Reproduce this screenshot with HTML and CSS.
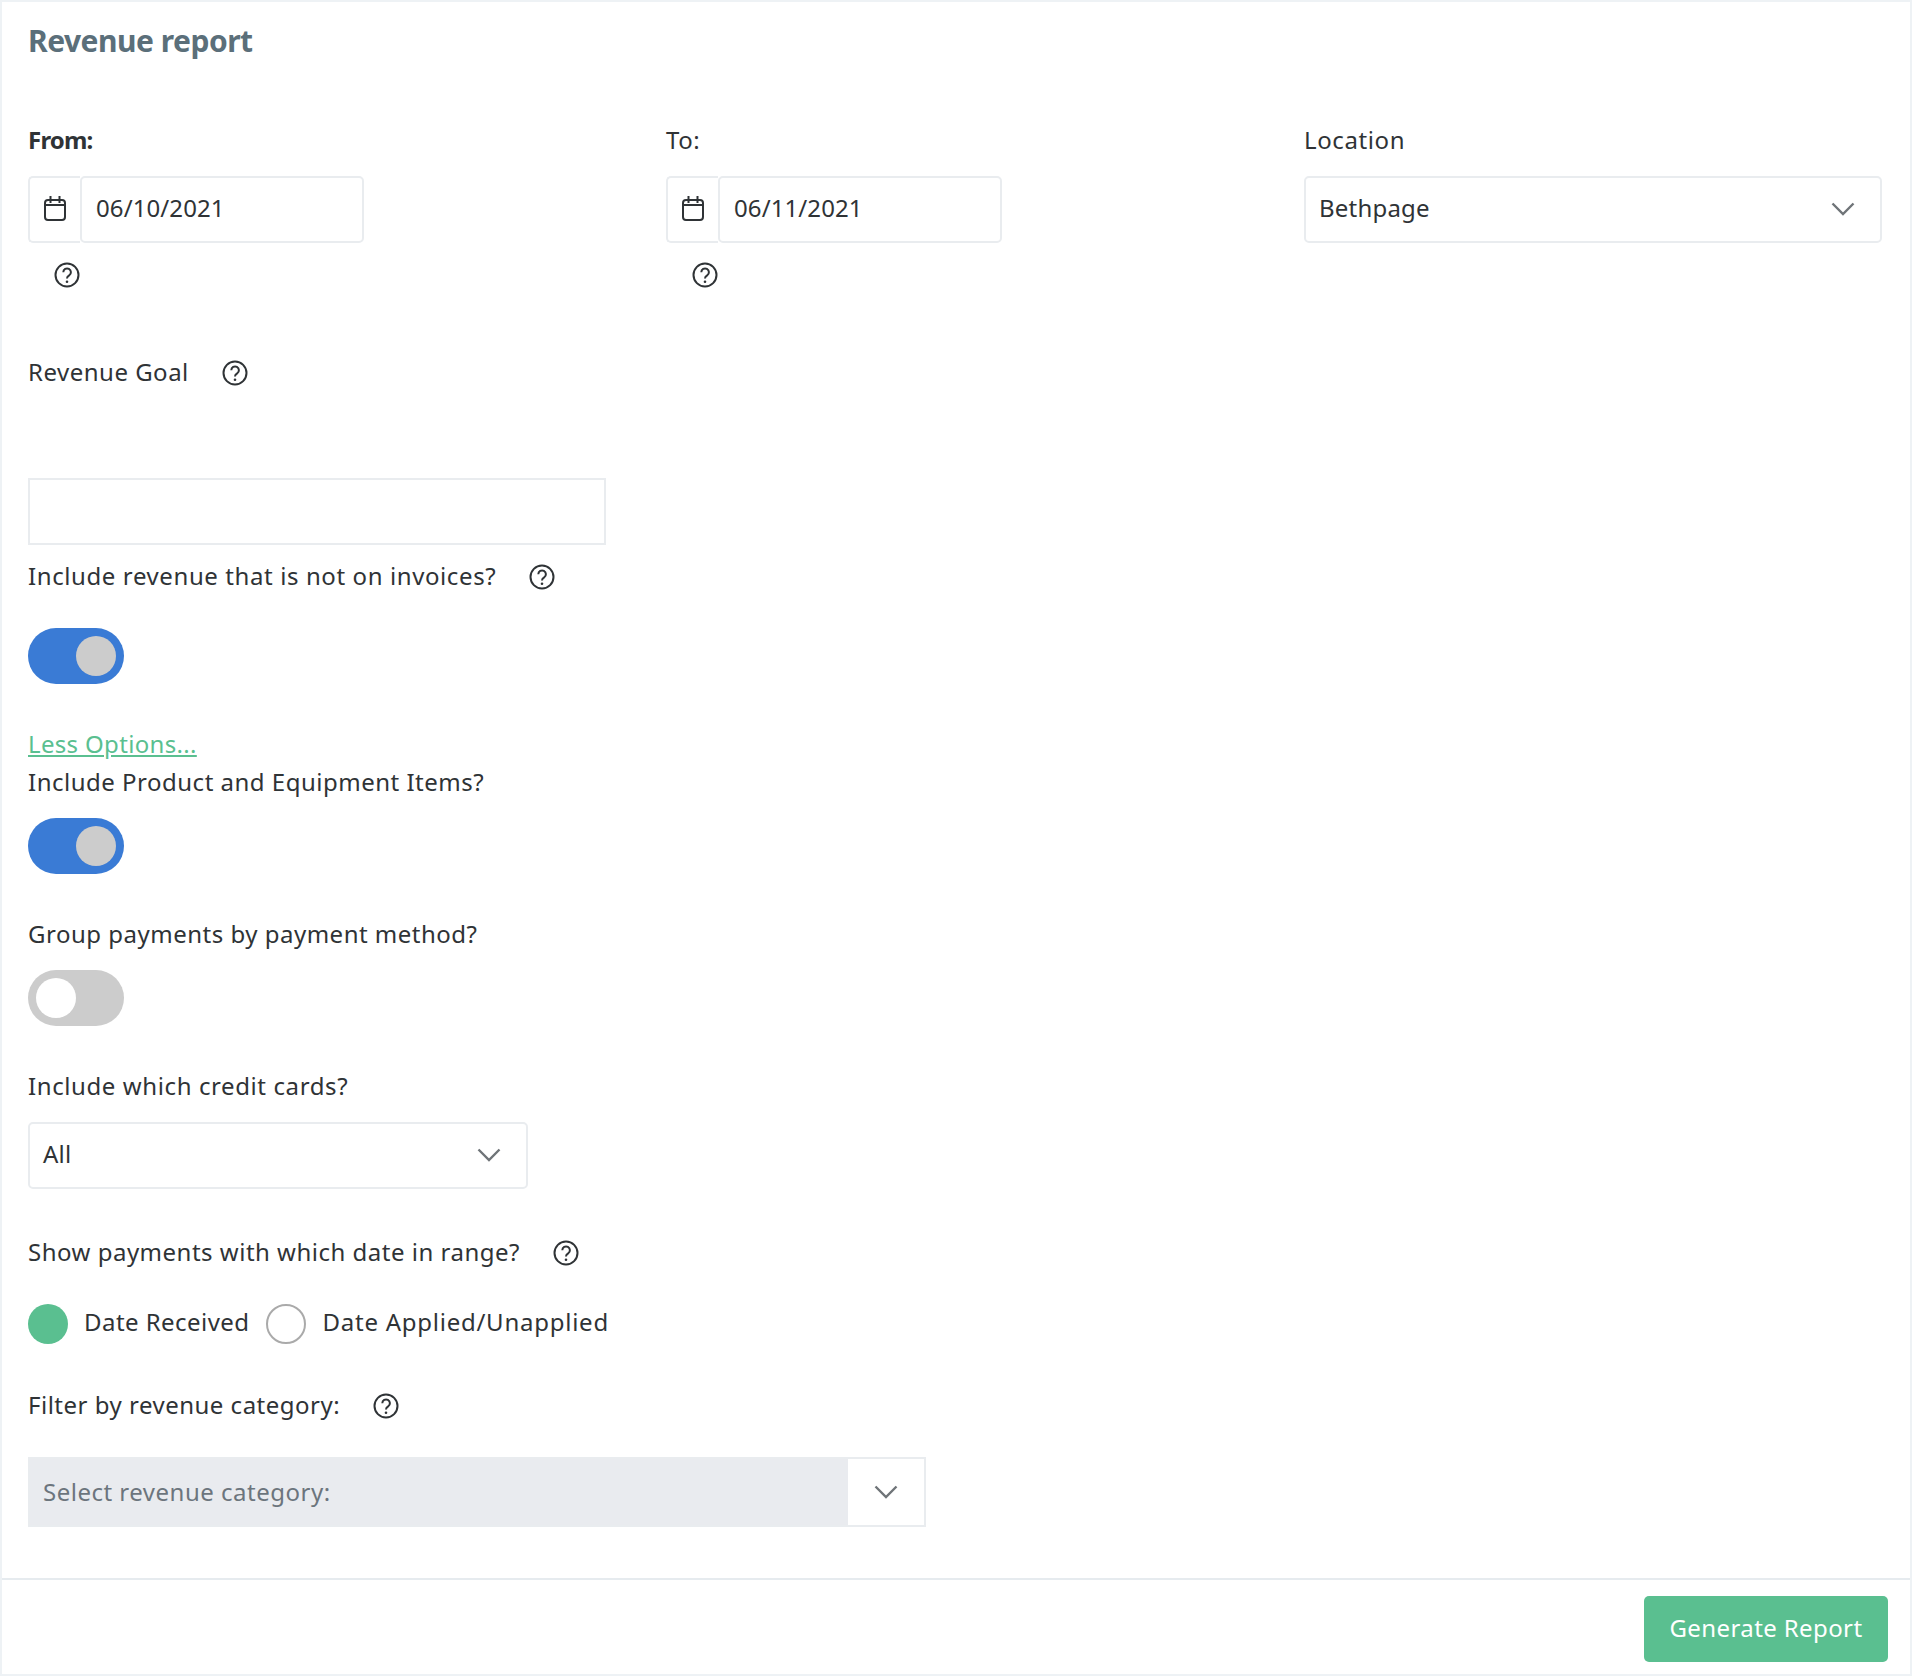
FILE: index.html
```html
<!DOCTYPE html>
<html lang="en">
  <head>
    <meta charset="UTF-8" />
    <meta name="viewport" content="width=device-width, initial-scale=1.0" />
    <title>Revenue report</title>
    <link rel="stylesheet" href="styles.css">
  </head>
  <body>
    <svg class="defs" width="0" height="0">
      <symbol id="help" viewBox="0 0 26 26">
        <circle cx="13" cy="13" r="11.5" fill="none" stroke="currentColor" stroke-width="2" />
        <path d="M9.3 10.2a3.8 3.8 0 1 1 5.9 3.2c-1.4.9-2.2 1.6-2.2 3" fill="none" stroke="currentColor" stroke-width="2" />
        <circle cx="13" cy="19.8" r="1.3" fill="currentColor" />
      </symbol>
      <symbol id="calendar" viewBox="0 0 22 26">
        <rect x="1" y="5" width="20" height="20" rx="3" fill="none" stroke="currentColor" stroke-width="2" />
        <path d="M1 10h20M6.500 1v7M15.500 1v7" fill="none" stroke="currentColor" stroke-width="2" />
      </symbol>
      <symbol id="chevron" viewBox="0 0 24 14">
        <path d="M1.500 1.500 12 12 22.500 1.500" fill="none" stroke="currentColor" stroke-width="2.400" />
      </symbol>
    </svg>

    <div class="panel">
      <div class="panel-body">
        <h1 class="panel-title">Revenue report</h1>

        <div class="date-row">
          <div class="date-col">
            <label class="label label-bold">From:</label>
            <div class="date-input">
              <span class="date-addon"><svg class="icon-calendar"><use href="#calendar" /></svg></span>
              <span class="date-value">06/10/2021</span>
            </div>
            <svg class="icon-help date-help"><use href="#help" /></svg>
          </div>
          <div class="date-col">
            <label class="label">To:</label>
            <div class="date-input">
              <span class="date-addon"><svg class="icon-calendar"><use href="#calendar" /></svg></span>
              <span class="date-value">06/11/2021</span>
            </div>
            <svg class="icon-help date-help"><use href="#help" /></svg>
          </div>
          <div class="date-col">
            <label class="label label-wide">Location</label>
            <div class="select">
              <span class="select-text">Bethpage</span>
              <svg class="icon-chevron"><use href="#chevron" /></svg>
            </div>
          </div>
        </div>

        <div class="label-row goal-label">
          <label class="label">Revenue Goal</label>
          <svg class="icon-help"><use href="#help" /></svg>
        </div>
        <div class="text-input"></div>

        <div class="label-row invoices-label">
          <label class="label label-wide">Include revenue that is not on invoices?</label>
          <svg class="icon-help"><use href="#help" /></svg>
        </div>
        <div class="toggle toggle-on toggle-invoices"><span class="knob"></span></div>

        <a class="options-link" href="#">Less Options...</a>
        <label class="label">Include Product and Equipment Items?</label>
        <div class="toggle toggle-on toggle-items"><span class="knob"></span></div>

        <label class="label label-spaced">Group payments by payment method?</label>
        <div class="toggle toggle-items"><span class="knob"></span></div>

        <label class="label label-wide label-spaced">Include which credit cards?</label>
        <div class="select select-cards">
          <span class="select-text">All</span>
          <svg class="icon-chevron"><use href="#chevron" /></svg>
        </div>

        <div class="label-row payments-label">
          <label class="label">Show payments with which date in range?</label>
          <svg class="icon-help"><use href="#help" /></svg>
        </div>
        <div class="radios">
          <span class="radio radio-checked"></span>
          <span class="radio-text radio-text-tight">Date Received</span>
          <span class="radio"></span>
          <span class="radio-text">Date Applied/Unapplied</span>
        </div>

        <div class="label-row filter-label">
          <label class="label">Filter by revenue category:</label>
          <svg class="icon-help"><use href="#help" /></svg>
        </div>
        <div class="combo">
          <span class="combo-text">Select revenue category:</span>
          <span class="combo-arrow"><svg class="icon-chevron"><use href="#chevron" /></svg></span>
        </div>
      </div>

      <div class="panel-footer">
        <button class="btn-generate">Generate Report</button>
      </div>
    </div>
  </body>
</html>
```

FILE: styles.css
```css
* {
  margin: 0;
  padding: 0;
  box-sizing: border-box;
}
body {
  background: #fff;
  color: #2f3336;
  font: normal 24px/30px "Noto Sans", "Open Sans", sans-serif;
}
.defs {
  position: absolute;
}
.panel {
  height: 1676px;
  border: 2px solid #eef2f5;
  background: #fff;
}
.panel-body {
  height: 1576px;
  padding: 21px 26px 0;
}
.panel-title {
  color: #5b6f7a;
  font-size: 30px;
  line-height: 36px;
  font-weight: 700;
  letter-spacing: -0.5px;
}
.date-row {
  display: grid;
  grid-template-columns: repeat(3, 578px);
  column-gap: 60px;
  margin-top: 67px;
}
.label {
  display: block;
  padding-bottom: 2px;
  line-height: 28px;
  letter-spacing: 0.5px;
}
.label-wide {
  letter-spacing: 0.6px;
}
.label-bold {
  font-weight: 700;
  letter-spacing: -0.8px;
}
.label-spaced {
  margin-top: 46px;
}
.label-row {
  display: flex;
  align-items: center;
}
.date-input {
  display: flex;
  width: 336px;
  height: 67px;
  margin-top: 20px;
}
.date-addon {
  display: flex;
  align-items: center;
  justify-content: center;
  width: 52px;
  border: 2px solid #e9ecef;
  border-right: 0;
  border-radius: 5px 0 0 5px;
}
.date-value {
  flex: 1;
  padding-left: 14px;
  line-height: 60px;
  letter-spacing: 0.1px;
  border: 2px solid #e9ecef;
  border-radius: 5px;
}
.icon-calendar {
  width: 22px;
  height: 26px;
  margin-bottom: 3px;
}
.icon-help {
  display: block;
  width: 26px;
  height: 26px;
  margin-left: 33px;
  flex-shrink: 0;
}
.date-help {
  margin: 19px 0 0 26px;
}
.select {
  display: flex;
  align-items: center;
  justify-content: space-between;
  height: 67px;
  margin-top: 20px;
  padding: 0 25px 0 13px;
  border: 2px solid #e9ecef;
  border-radius: 5px;
}
.select-text {
  padding-bottom: 3px;
  letter-spacing: 0.2px;
}
.select-cards {
  width: 500px;
}
.icon-chevron {
  display: block;
  width: 24px;
  height: 14px;
  margin-bottom: 1px;
  color: #6f7478;
}
.goal-label {
  margin-top: 70px;
}
.text-input {
  width: 578px;
  height: 67px;
  margin-top: 90px;
  border: 2px solid #e9ecef;
}
.invoices-label {
  margin-top: 17px;
}
.toggle {
  display: flex;
  align-items: center;
  width: 96px;
  height: 56px;
  padding: 0 8px;
  border-radius: 28px;
  background: #ccc;
}
.toggle-on {
  justify-content: flex-end;
  background: #3a7bd5;
}
.knob {
  width: 40px;
  height: 40px;
  border-radius: 50%;
  background: #fff;
}
.toggle-on .knob {
  background: #ccc;
}
.toggle-invoices {
  margin-top: 36px;
}
.toggle-items {
  margin-top: 20px;
}
.options-link {
  display: block;
  margin-top: 46px;
  margin-bottom: 8px;
  padding-bottom: 2px;
  line-height: 28px;
  letter-spacing: 0.33px;
  color: #5abf90;
  text-decoration: underline;
}
.select-cards {
  margin-top: 20px;
}
.payments-label {
  margin-top: 49px;
}
.radios {
  display: flex;
  align-items: center;
  margin-top: 36px;
}
.radio {
  width: 40px;
  height: 40px;
  border: 2px solid #aaa;
  border-radius: 50%;
}
.radio-checked {
  border: 0;
  background: #5abf90;
}
.radio-text {
  margin: 0 17px 0 16px;
  padding-bottom: 4px;
  letter-spacing: 0.75px;
}
.radio-text-tight {
  letter-spacing: 0.45px;
}
.filter-label {
  margin-top: 47px;
}
.combo {
  display: flex;
  width: 898px;
  height: 70px;
  margin-top: 36px;
  border: 2px solid #e9ecef;
}
.combo-text {
  flex: 1;
  padding-left: 13px;
  line-height: 66px;
  letter-spacing: 0.5px;
  color: #6c757d;
  background: #e9ebef;
}
.combo-arrow {
  display: flex;
  align-items: center;
  justify-content: center;
  width: 76px;
}
.panel-footer {
  display: flex;
  justify-content: flex-end;
  height: 96px;
  padding: 16px 22px 0 0;
  border-top: 2px solid #e6ebef;
}
.btn-generate {
  width: 244px;
  height: 66px;
  padding-bottom: 2px;
  border: 0;
  border-radius: 5px;
  color: #fff;
  background: #5abf90;
  font: normal 24px/30px "Noto Sans", "Open Sans", sans-serif;
  letter-spacing: 0.4px;
}
```
